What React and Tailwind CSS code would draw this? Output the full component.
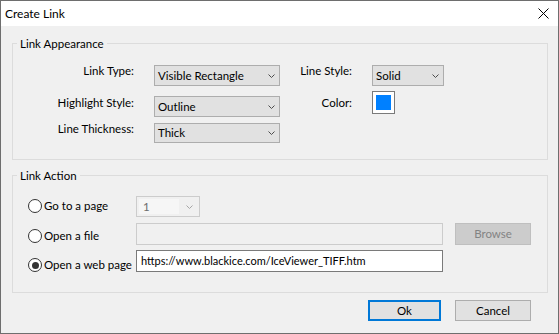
import React from 'react';

const Chevron = ({ color = '#4d4d4d' }) => (
  <svg width="7" height="4" viewBox="0 0 7 4" className="shrink-0">
    <path d="M0.5 0.5 L3.5 3.5 L6.5 0.5" fill="none" stroke={color} strokeWidth="1" />
  </svg>
);

function Select({ value, className }) {
  return (
    <div className={`flex items-center justify-between border border-[#adadad] bg-[#e1e1e1] pl-[3px] pr-[4px] ${className}`}>
      <span className="leading-[16px]">{value}</span>
      <Chevron />
    </div>
  );
}

function Radio({ checked }) {
  return (
    <span className="flex h-[14px] w-[14px] shrink-0 items-center justify-center rounded-full border border-[#333] bg-white">
      {checked && <span className="h-[7px] w-[7px] rounded-full bg-[#333]" />}
    </span>
  );
}

function Group({ title, children, className }) {
  return (
    <div className={`relative border border-[#dcdcdc] ${className}`}>
      <span className="absolute -top-[8px] left-[4px] bg-[#f0f0f0] px-[3px] leading-[16px]">{title}</span>
      {children}
    </div>
  );
}

export default function App() {
  return (
    <div className="flex h-[334px] w-[559px] flex-col border border-[#6e6e6e] bg-[#f0f0f0] font-['Lato',sans-serif] text-[11.5px] text-black">
      {/* title bar */}
      <div className="flex h-[25px] shrink-0 items-center justify-between bg-white pl-[4px] pr-[9px]">
        <span className="text-[12px] leading-[16px]">Create Link</span>
        <svg width="11" height="11" viewBox="0 0 11 11">
          <path d="M0.5 0.5 L10.5 10.5 M10.5 0.5 L0.5 10.5" stroke="#000" strokeWidth="1" />
        </svg>
      </div>

      <div className="flex flex-1 flex-col pl-[11px] pr-[10px]">
        {/* Link Appearance */}
        <Group title="Link Appearance" className="mt-[17px] h-[117px] pt-[21px]">
          <div className="flex h-[21px] items-start">
            <span className="mt-[-2px] w-[121px] text-right leading-[16px]">Link Type:</span>
            <Select value="Visible Rectangle" className="ml-[20px] h-[21px] w-[126px]" />
            <span className="mt-[-2px] w-[72px] text-right leading-[16px]">Line Style:</span>
            <Select value="Solid" className="ml-[20px] h-[21px] w-[72px]" />
          </div>
          <div className="mt-[5px] flex h-[23px] items-start">
            <span className="mt-[4px] w-[121px] text-right leading-[16px]">Highlight Style:</span>
            <Select value="Outline" className="ml-[20px] mt-[5px] h-[21px] w-[126px]" />
            <span className="mt-[4px] w-[72px] text-right leading-[16px]">Color:</span>
            <div className="ml-[20px] h-[23px] w-[23px] border border-[#7a7a7a] bg-white p-[3px]">
              <div className="h-full w-full bg-[#0080ff]" />
            </div>
          </div>
          <div className="mt-[9px] flex h-[20px] items-start">
            <span className="mt-[-2px] w-[121px] text-right leading-[16px]">Line Thickness:</span>
            <Select value="Thick" className="ml-[20px] h-[20px] w-[126px]" />
          </div>
        </Group>

        {/* Link Action */}
        <Group title="Link Action" className="mt-[15px] h-[118px] pl-[15px] pt-[20px]">
          <div className="flex h-[21px] items-start">
            <label className="mt-[2px] flex w-[108px] items-center gap-[2px] leading-[16px]">
              <Radio />
              <span>Go to a page</span>
            </label>
            <div className="flex h-[21px] w-[64px] items-center border border-[#cccccc] bg-[#f0f0f0] p-[2px] pr-[6px]">
              <div className="flex h-full flex-1 items-center bg-[#f6f6f6] pl-[4px] leading-[16px] text-[#6d6d6d]">1</div>
              <span className="ml-[7px]">
                <Chevron color="#a6a6a6" />
              </span>
            </div>
          </div>
          <div className="mt-[6px] flex h-[22px] items-start">
            <label className="mt-[5px] flex w-[108px] items-center gap-[2px] leading-[16px]">
              <Radio />
              <span>Open a file</span>
            </label>
            <div className="h-[22px] w-[307px] border border-[#cccccc] bg-[#f0f0f0]" />
            <button className="ml-[12px] h-[22px] w-[76px] border border-[#bfbfbf] bg-[#cccccc] leading-[16px] text-[#838383]">
              Browse
            </button>
          </div>
          <div className="mt-[5px] flex h-[22px] items-start">
            <label className="mt-[7px] flex w-[108px] items-center gap-[2px] leading-[16px]">
              <Radio checked />
              <span>Open a web page</span>
            </label>
            <div className="flex h-[22px] w-[307px] items-center border border-[#7a7a7a] bg-white pl-[4px] text-[11px] leading-[16px]">
              https://www.blackice.com/IceViewer_TIFF.htm
            </div>
          </div>
        </Group>

        {/* buttons */}
        <div className="mt-[7px] mr-[17px] flex justify-end gap-[14px]">
          <button className="h-[21px] w-[73px] border-2 border-[#0078d7] bg-[#e1e1e1] leading-[16px]">Ok</button>
          <button className="h-[21px] w-[76px] border border-[#adadad] bg-[#e1e1e1] leading-[16px]">Cancel</button>
        </div>
      </div>
    </div>
  );
}
